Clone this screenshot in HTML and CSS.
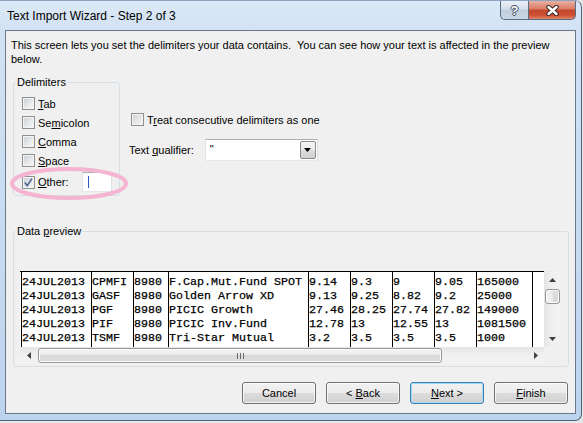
FILE: index.html
```html
<!DOCTYPE html>
<html lang="en">
<head>
    <meta charset="UTF-8">
    <title>Text Import Wizard - Step 2 of 3</title>
    <link rel="stylesheet" href="styles.css">
</head>
<body>
<div class="window">
    <div class="titlebar">
        <span class="title">Text Import Wizard - Step 2 of 3</span>
        <div class="caption">
            <span class="cap-btn help">?</span>
            <span class="cap-btn close">
                <svg width="13" height="11" viewBox="0 0 13 11">
                    <path d="M2.5 2 L10.5 9 M10.5 2 L2.5 9" stroke="#3b2a28" stroke-width="4.4" stroke-linecap="round"/>
                    <path d="M2.5 2 L10.5 9 M10.5 2 L2.5 9" stroke="#fff" stroke-width="2.4" stroke-linecap="round"/>
                </svg>
            </span>
        </div>
    </div>

    <div class="client">
        <p class="intro">This screen lets you set the delimiters your data contains.&nbsp; You can see how your text is affected in the preview below.</p>

        <div class="options">
            <fieldset class="group delims">
                <legend>Delimiters</legend>
                <div class="rows">
                    <div class="check"><span class="box"></span><span><u>T</u>ab</span></div>
                    <div class="check"><span class="box"></span><span>Se<u>m</u>icolon</span></div>
                    <div class="check"><span class="box"></span><span><u>C</u>omma</span></div>
                    <div class="check"><span class="box"></span><span><u>S</u>pace</span></div>
                    <div class="check other">
                        <span class="box">
                            <svg width="11" height="11" viewBox="0 0 11 11">
                                <path d="M1.8 5.6 L4.2 8.6 L9 1.6" fill="none" stroke="#4d6391" stroke-width="1.6"/>
                            </svg>
                        </span>
                        <span><u>O</u>ther:</span>
                        <span class="textbox"><span class="caret"></span></span>
                    </div>
                </div>
            </fieldset>

            <div class="side">
                <div class="check"><span class="box"></span><span>T<u>r</u>eat consecutive delimiters as one</span></div>
                <div class="qualifier">
                    <span>Text <u>q</u>ualifier:</span>
                    <div class="combo">
                        <span class="combo-value">"</span>
                        <span class="combo-btn">
                            <svg width="7" height="4" viewBox="0 0 7 4"><polygon points="0,0 7,0 3.5,4" fill="#000"/></svg>
                        </span>
                    </div>
                </div>
            </div>

            <!-- pink annotation round the Other option -->
            <svg class="mark" width="122" height="37" viewBox="0 0 122 37">
                <ellipse cx="61" cy="18.5" rx="57" ry="14.5" fill="none" stroke="#f4b4d2" stroke-width="4"/>
            </svg>
        </div>

        <fieldset class="group preview">
            <legend>Data <u>p</u>review</legend>
            <div class="pbox">
                <div class="data">
                    <div class="col w10"><div>24JUL2013</div><div>24JUL2013</div><div>24JUL2013</div><div>24JUL2013</div><div>24JUL2013</div></div>
                    <div class="col w6"><div>CPMFI</div><div>GASF</div><div>PGF</div><div>PIF</div><div>TSMF</div></div>
                    <div class="col w5"><div>8980</div><div>8980</div><div>8980</div><div>8980</div><div>8980</div></div>
                    <div class="col w20"><div>F.Cap.Mut.Fund SPOT</div><div>Golden Arrow XD</div><div>PICIC Growth</div><div>PICIC Inv.Fund</div><div>Tri-Star Mutual</div></div>
                    <div class="col w6"><div>9.14</div><div>9.13</div><div>27.46</div><div>12.78</div><div>3.2</div></div>
                    <div class="col w6"><div>9.3</div><div>9.25</div><div>28.25</div><div>13</div><div>3.5</div></div>
                    <div class="col w6"><div>9</div><div>8.82</div><div>27.74</div><div>12.55</div><div>3.5</div></div>
                    <div class="col w6"><div>9.05</div><div>9.2</div><div>27.82</div><div>13</div><div>3.5</div></div>
                    <div class="col w8"><div>165000</div><div>25000</div><div>149000</div><div>1081500</div><div>1000</div></div>
                    <div class="col rest"></div>
                </div>
                <div class="vscroll">
                    <span class="arrow"><svg width="7" height="4" viewBox="0 0 7 4"><polygon points="0,4 7,4 3.5,0" fill="#404040"/></svg></span>
                    <span class="thumb vthumb"></span>
                    <span class="arrow down"><svg width="7" height="4" viewBox="0 0 7 4"><polygon points="0,0 7,0 3.5,4" fill="#404040"/></svg></span>
                </div>
                <div class="hscroll">
                    <span class="arrow"><svg width="4" height="7" viewBox="0 0 4 7"><polygon points="4,0 4,7 0,3.5" fill="#404040"/></svg></span>
                    <span class="thumb hthumb"><span class="grip"></span></span>
                    <span class="arrow right"><svg width="4" height="7" viewBox="0 0 4 7"><polygon points="0,0 0,7 4,3.5" fill="#404040"/></svg></span>
                </div>
                <div class="corner"></div>
            </div>
        </fieldset>

        <div class="buttons">
            <button class="btn">Cancel</button>
            <button class="btn">&lt; <u>B</u>ack</button>
            <button class="btn default"><u>N</u>ext &gt;</button>
            <button class="btn"><u>F</u>inish</button>
        </div>
    </div>
</div>
</body>
</html>
```

FILE: styles.css
```css
body {
    margin: 0;
    background: #e6e7e9;
    font-family: "Liberation Sans", Arial, sans-serif;
    font-size: 11px;
    color: #000;
}

/* window frame */
.window {
    width: 582px;
    height: 421px;
    box-sizing: border-box;
    border-top: 1px solid #8ea3bd;
    border-right: 1px solid #52627a;
    border-bottom: 1px solid #52627a;
    border-top-right-radius: 7px;
    border-bottom-right-radius: 7px;
    background: linear-gradient(to bottom, #dbe8f7 0%, #d2e2f4 30px, #c6daf0 60%, #bdd4ee 100%);
    display: flex;
    flex-direction: column;
}

.titlebar {
    height: 29px;
    flex: none;
    display: flex;
    justify-content: space-between;
    padding: 0 5px 0 7px;
}
.title {
    font-size: 12px;
    line-height: 27px;
    padding-top: 2px;
}
.caption {
    display: flex;
    align-self: flex-start;
}
.cap-btn {
    height: 19px;
    box-sizing: border-box;
    border: 1px solid #5b6c82;
    border-top: none;
    display: flex;
    align-items: center;
    justify-content: center;
}
.help {
    width: 28px;
    border-right: none;
    border-bottom-left-radius: 5px;
    background: linear-gradient(#e8eff8, #d5e0ec 45%, #bfcddd 50%, #cad7e6);
    color: #fff;
    font-weight: bold;
    font-size: 13px;
    text-shadow: 1px 0 0 #3d4a5a, -1px 0 0 #3d4a5a, 0 1px 0 #3d4a5a, 0 -1px 0 #3d4a5a;
}
.close {
    width: 48px;
    border-bottom-right-radius: 5px;
    background: linear-gradient(#eab0a2, #d97a63 45%, #c3462d 50%, #cf5236 80%, #e2876a);
}

/* client area */
.client {
    flex: 1;
    margin: 0 5px 6px 5px;
    border: 1px solid #6a7889;
    background: #f0f0f0;
    display: flex;
    flex-direction: column;
}
.intro {
    margin: 0;
    padding: 7px 9px 0 5px;
    line-height: 14px;
}

.group {
    margin: 0;
    box-sizing: border-box;
    border: 1px solid #d5dfe5;
    border-radius: 3px;
    padding: 0 0 0 2px;
    min-inline-size: 0;
}
.group legend {
    padding: 0 1px;
    line-height: 14px;
}

.options {
    display: flex;
    align-items: flex-start;
    margin-top: 9px;
    position: relative;
}
.delims {
    margin-left: 7px;
    width: 107px;
    padding-bottom: 1px;
}
.rows {
    padding: 5px 0 0 6px;
}

.check {
    display: flex;
    align-items: center;
    gap: 3px;
    height: 19px;
    white-space: nowrap;
}
.check.other {
    height: 24px;
}
.box {
    width: 13px;
    height: 13px;
    flex: none;
    box-sizing: border-box;
    border: 1px solid #8f8f8f;
    background: linear-gradient(135deg, #c9cdd3 0%, #e6e8ea 55%, #f7f7f7 100%);
    box-shadow: inset 0 0 0 1px #f4f4f4;
}
.box svg {
    display: block;
}
.textbox {
    margin-left: 10px;
    width: 30px;
    height: 20px;
    box-sizing: border-box;
    border: 1px solid;
    border-color: #abadb3 #dbdfe6 #e3e9ef #e2e3ea;
    background: #fff;
    padding: 3px 0 0 5px;
}
.caret {
    display: block;
    width: 1px;
    height: 12px;
    background: #2a5bbf;
}

.mark {
    position: absolute;
    left: 2px;
    top: 90px;
}

.side {
    margin-left: 9px;
    padding-top: 35px;
}
.side .check {
    padding-left: 2px;
}
.qualifier {
    display: flex;
    align-items: center;
    gap: 11px;
    height: 22px;
    margin-top: 10px;
}
.combo {
    width: 113px;
    height: 22px;
    box-sizing: border-box;
    border: 1px solid;
    border-color: #abadb3 #dbdfe6 #e3e9ef #e2e3ea;
    background: #fff;
    padding: 1px;
    display: flex;
    justify-content: space-between;
}
.combo-value {
    padding: 1px 0 0 3px;
    line-height: 14px;
}
.combo-btn {
    width: 16px;
    box-sizing: border-box;
    border: 1px solid #8a8c8f;
    border-radius: 2px;
    background: linear-gradient(#f4f4f4, #ebebeb 50%, #dcdcdc 50%, #d0d0d0);
    display: flex;
    align-items: center;
    justify-content: center;
}

/* data preview */
.preview {
    margin: 28px 6px 0 7px;
    padding-bottom: 2px;
}
.pbox {
    margin: 33px 0 0 4px;
    width: 541px;
    display: grid;
    grid-template-columns: 524px 17px;
    grid-template-rows: 76px 17px;
}
.data {
    background: #fff;
    border-top: 1px solid #000;
    padding-left: 1px;
    display: flex;
    overflow: hidden;
    font-family: "Liberation Mono", "Courier New", monospace;
    font-size: 11.67px;
    line-height: 14px;
    white-space: pre;
    -webkit-text-stroke: 0.25px #000;
}
.col {
    flex: none;
    box-sizing: border-box;
    border-left: 1px solid #000;
    padding-top: 3px;
}
.w5 { width: 35px; }
.w6 { width: 42px; }
.w8 { width: 56px; }
.w10 { width: 70px; }
.w20 { width: 140px; }
.col.rest { flex: 1; }

.vscroll, .hscroll {
    display: flex;
    justify-content: space-between;
    align-items: center;
}
.vscroll {
    flex-direction: column;
    background: linear-gradient(to right, #e4e4e4, #f0f0f0 45%, #f2f2f2);
}
.hscroll {
    background: linear-gradient(#e4e4e4, #f0f0f0 45%, #f2f2f2);
}
.arrow {
    width: 17px;
    height: 17px;
    flex: none;
    display: flex;
    align-items: center;
    justify-content: center;
}
.thumb {
    box-sizing: border-box;
    border: 1px solid #989898;
    border-radius: 3px;
    box-shadow: inset 0 0 0 1px #fbfbfb;
}
.vthumb {
    width: 15px;
    height: 15px;
    margin: 1px 0 auto;
    background: linear-gradient(to right, #f4f4f4, #e9e9e9 50%, #d9d9d9 50%, #dedede);
}
.hthumb {
    height: 15px;
    width: 404px;
    margin: 0 auto 0 1px;
    background: linear-gradient(#f4f4f4, #e9e9e9 50%, #d9d9d9 50%, #dedede);
    display: flex;
    align-items: center;
    justify-content: center;
}
.grip {
    width: 7px;
    height: 6px;
    background: repeating-linear-gradient(to right, #6a6a6a 0 1px, transparent 1px 3px);
}
.corner {
    background: #f0f0f0;
}

/* dialog buttons */
.buttons {
    display: flex;
    justify-content: flex-end;
    gap: 10px;
    margin-top: 15px;
    padding-right: 7px;
}
.btn {
    width: 74px;
    height: 22px;
    box-sizing: border-box;
    border: 1px solid #707070;
    border-radius: 3px;
    background: linear-gradient(#f2f2f2 0%, #ebebeb 49%, #dddddd 50%, #cfcfcf 100%);
    box-shadow: inset 0 0 0 1px rgba(255, 255, 255, 0.75);
    font: inherit;
    color: #000;
    padding: 0;
}
.btn.default {
    border-color: #3c7fb1;
    box-shadow: inset 0 0 0 1px #9fdcf7;
}
```
